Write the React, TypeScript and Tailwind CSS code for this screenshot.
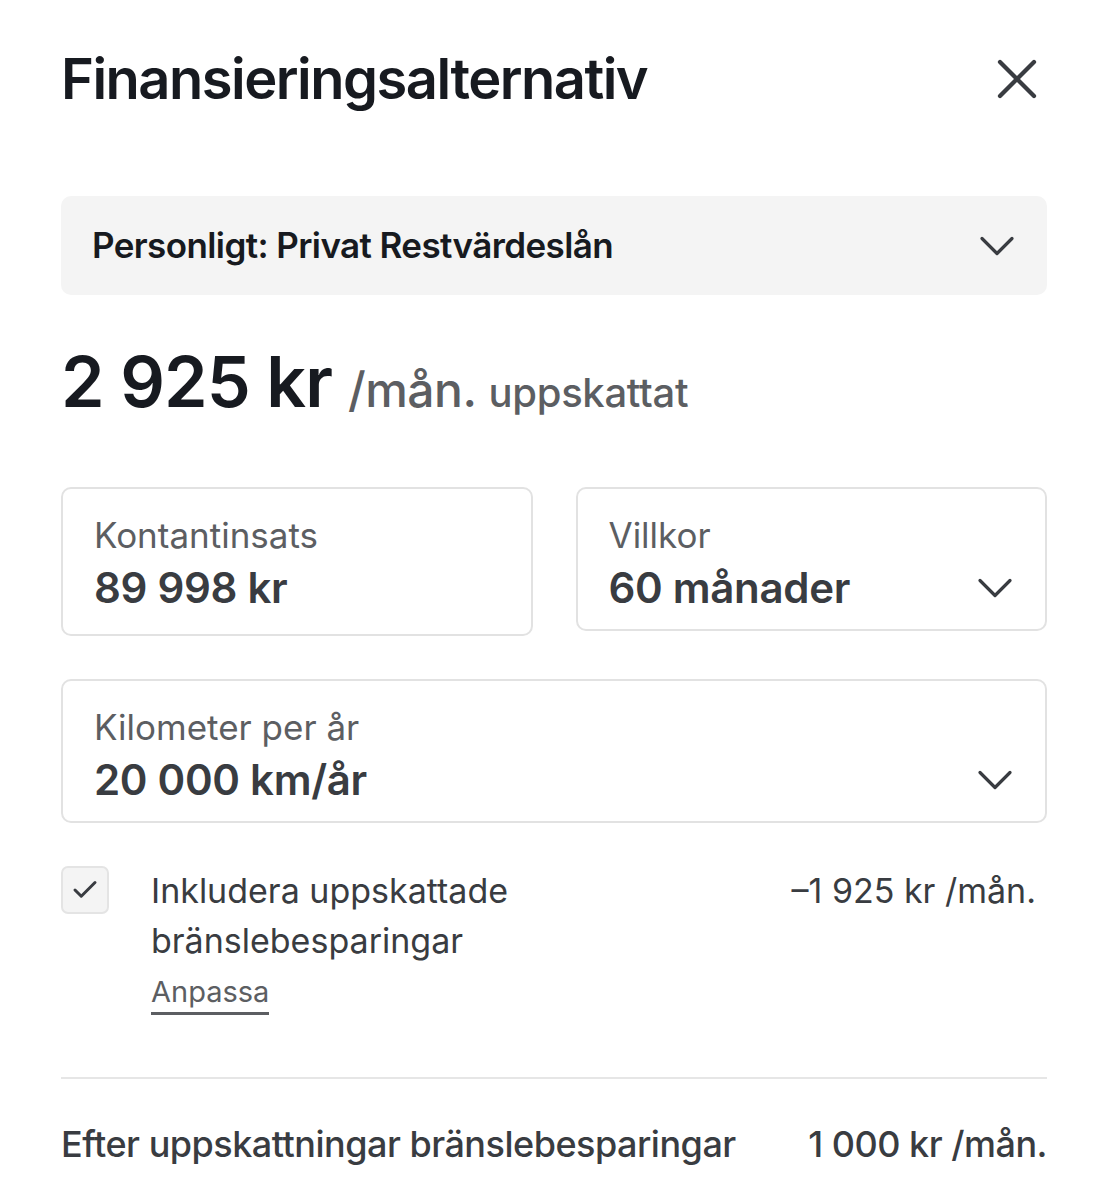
import { ChevronDown, Check, X } from 'lucide-react';

function Field({ label, value, chevron, className }: { label: string; value: string; chevron?: boolean; className?: string }) {
  return (
    <div className={`flex flex-col rounded-[10px] border-2 border-[#e2e2e2] pl-[31px] pr-[20px] pt-[26px] ${className ?? ''}`}>
      <span className="text-[35px] leading-[40px] text-[#5c5e62]">{label}</span>
      <div className="mt-[9px] flex h-[48px] items-center justify-between">
        <span className="text-[42px] leading-[48px] font-semibold tracking-[-0.3px] text-[#393c41]">{value}</span>
        {chevron && <ChevronDown className="-my-[6px] h-[60px] w-[60px] text-[#393c41]" strokeWidth={1.3} />}
      </div>
    </div>
  );
}

export default function App() {
  return (
    <div className="min-h-[1200px] bg-white font-['Inter',sans-serif] text-[#171a20]">
      <div className="px-[61px] pt-[44px]">
        {/* Header */}
        <div className="flex items-center justify-between">
          <h1 className="text-[56px] leading-[70px] font-semibold tracking-[-1.5px]">Finansieringsalternativ</h1>
          <X className="-mr-[4px] h-[68px] w-[68px] text-[#393c41]" strokeWidth={1.5} />
        </div>

        {/* Loan type select */}
        <div className="mt-[82px] flex h-[99px] items-center justify-between rounded-[10px] bg-[#f4f4f4] pl-[31px] pr-[20px]">
          <span className="text-[35px] font-semibold tracking-[-0.6px] text-[#171a20]">Personligt: Privat Restvärdeslån</span>
          <ChevronDown className="h-[60px] w-[60px] text-[#393c41]" strokeWidth={1.3} />
        </div>

        {/* Price */}
        <div className="mt-[47px] flex items-baseline">
          <span className="text-[70px] leading-[80px] font-semibold tracking-[-1px]">2 925 kr</span>
          <span className="ml-[16px] text-[48px] font-medium tracking-[-0.5px] text-[#5c5e62]">/mån.</span>
          <span className="ml-[12px] text-[40px] font-medium tracking-[-0.3px] text-[#5c5e62]">uppskattat</span>
        </div>

        {/* Fields */}
        <div className="mt-[61px] grid grid-cols-2 gap-x-[43px] items-start">
          <Field label="Kontantinsats" value="89 998 kr" className="h-[149px]" />
          <Field label="Villkor" value="60 månader" chevron className="h-[144px]" />
        </div>
        <Field label="Kilometer per år" value="20 000 km/år" chevron className="mt-[43px] h-[144px]" />

        {/* Fuel savings */}
        <div className="mt-[43px] flex items-start">
          <div className="flex h-[48px] w-[48px] shrink-0 items-center justify-center rounded-[7px] border-2 border-[#e4e4e4] bg-[#f4f4f4]">
            <Check className="h-[30px] w-[30px] text-[#393c41]" strokeWidth={2.4} />
          </div>
          <div className="ml-[42px] flex flex-1 flex-col">
            <div className="flex items-start justify-between">
              <span className="text-[34px] leading-[50px] text-[#393c41]">
                Inkludera uppskattade<br />bränslebesparingar
              </span>
              <span className="mr-[11px] text-[34px] leading-[50px] text-[#393c41]">–1 925 kr /mån.</span>
            </div>
            <span className="mt-[6px] self-start border-b-[3px] border-[#5c5e62] text-[29px] leading-[40px] text-[#5c5e62]">Anpassa</span>
          </div>
        </div>

        <div className="mt-[62px] h-[2px] bg-[#e6e6e6]" />

        <div className="mt-[43px] flex items-center justify-between">
          <span className="text-[36px] leading-[44px] font-medium tracking-[-0.5px] text-[#393c41]">Efter uppskattningar bränslebesparingar</span>
          <span className="text-[36px] leading-[44px] font-medium tracking-[-0.5px] text-[#393c41]">1 000 kr /mån.</span>
        </div>
      </div>
    </div>
  );
}
